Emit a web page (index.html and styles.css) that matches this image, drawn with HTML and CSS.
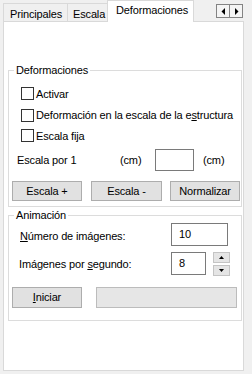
FILE: index.html
```html
<!DOCTYPE html>
<html>
<head>
<meta charset="utf-8">
<link rel="stylesheet" href="styles.css">
</head>
<body>
<div class="tabs">
  <div class="tab first">Principales</div>
  <div class="tab second">Escala</div>
  <div class="tab active">Deformaciones</div>
  <div class="arrows">
    <div class="arrow"><svg width="5" height="7" viewBox="0 0 5 7"><path d="M4 0 L4 7 L0.5 3.5 Z" fill="#000"/></svg></div>
    <div class="arrow"><svg width="5" height="7" viewBox="0 0 5 7"><path d="M1 0 L1 7 L4.5 3.5 Z" fill="#000"/></svg></div>
  </div>
</div>
<div class="panel">
  <fieldset class="group g1">
    <legend>Deformaciones</legend>
    <div class="check r1"><span class="box"></span><span>Activar</span></div>
    <div class="check r2"><span class="box"></span><span>Deformación en la escala de la e<u>s</u>tructura</span></div>
    <div class="check r3"><span class="box"></span><span>Escala fija</span></div>
    <div class="scale-row">
      <span class="lbl-scale">Escala por 1</span>
      <span class="cm1">(cm)</span>
      <span class="input in-scale"></span>
      <span class="cm2">(cm)</span>
    </div>
    <div class="btn-row">
      <div class="btn b1">Escala +</div>
      <div class="btn b2">Escala -</div>
      <div class="btn b3">Normalizar</div>
    </div>
  </fieldset>
  <fieldset class="group g2">
    <legend>Animación</legend>
    <div class="field-row fr1">
      <span class="flabel"><u>N</u>úmero de imágenes:</span>
      <span class="input in-num">10</span>
    </div>
    <div class="field-row fr2">
      <span class="flabel">Imágenes por <u>s</u>egundo:</span>
      <span class="input in-fps">8</span>
      <div class="spin">
        <div class="spb"><svg width="5" height="3" viewBox="0 0 5 3"><path d="M0 3 L5 3 L2.5 0 Z" fill="#000"/></svg></div>
        <div class="spb"><svg width="5" height="3" viewBox="0 0 5 3"><path d="M0 0 L5 0 L2.5 3 Z" fill="#000"/></svg></div>
      </div>
    </div>
    <div class="run-row">
      <div class="btn b-start"><u>I</u>niciar</div>
      <div class="progress"></div>
    </div>
  </fieldset>
</div>
</body>
</html>
```
FILE: styles.css
```css
html, body {
  margin: 0;
  padding: 0;
}
body {
  width: 252px;
  height: 374px;
  overflow: hidden;
  background: #f0f0f0;
  font-family: "Liberation Sans", Arial, sans-serif;
  font-size: 11px;
  letter-spacing: -0.15px;
  color: #000;
  white-space: nowrap;
}
u {
  text-decoration: underline;
  text-underline-offset: 1px;
}
.tabs {
  display: flex;
  align-items: flex-end;
  height: 21px;
  padding-left: 3px;
  position: relative;
}
.tab {
  box-sizing: border-box;
  height: 18px;
  border: 1px solid #d9d9d9;
  border-bottom: none;
  background: #f0f0f0;
  padding: 4px 0 0 6px;
  line-height: 13px;
  overflow: hidden;
}
.tab.first { width: 65px; }
.tab.second { width: 41px; margin-left: -1px; padding-left: 5px; }
.tab.active {
  width: 87px;
  height: 22px;
  margin-bottom: -1px;
  margin-left: -1px;
  background: #fff;
  position: relative;
  z-index: 1;
  padding: 3px 0 0 8px;
}
.arrows {
  display: flex;
  align-self: flex-start;
  margin: 4px 9px 0 auto;
}
.arrow {
  box-sizing: border-box;
  width: 14px;
  height: 14px;
  border: 1px solid #838383;
  background: #f4f4f4;
  display: flex;
  align-items: center;
  justify-content: center;
}
.arrow + .arrow { margin-left: -1px; }
.panel {
  box-sizing: border-box;
  margin-left: 3px;
  width: 241px;
  height: 350px;
  border: 1px solid #d9d9d9;
  background: #fff;
  padding-top: 41px;
}
.group {
  box-sizing: border-box;
  margin: 0 1px 0 4px;
  padding: 0;
  border: 1px solid #dcdcdc;
  width: 234px;
  min-width: 0;
}
.group legend {
  margin-left: 5px;
  padding: 0 2px;
  line-height: 14px;
  height: 14px;
}
.g2 { margin-top: 1px; }
.check {
  display: flex;
  align-items: center;
  padding-left: 12px;
}
.check .box {
  box-sizing: border-box;
  width: 13px;
  height: 13px;
  border: 1px solid #333;
  background: #fff;
  margin-right: 2px;
  flex: none;
}
.r1 { margin-top: 6px; height: 21px; }
.r2 { height: 22px; }
.r3 { height: 19px; }
.scale-row {
  display: flex;
  align-items: center;
  height: 22px;
  margin-top: 4px;
  padding-left: 8px;
}
.lbl-scale { width: 103px; }
.cm1 { width: 35px; }
.input {
  box-sizing: border-box;
  border: 1px solid #7a7a7a;
  background: #fff;
  display: block;
}
.in-scale { width: 39px; height: 22px; margin-right: 9px; }
.btn-row {
  display: flex;
  margin: 10px 0 5px 3px;
  gap: 8px;
}
.btn {
  box-sizing: border-box;
  height: 20px;
  width: 70px;
  border: 1px solid #adadad;
  background: #e1e1e1;
  text-align: center;
  line-height: 18px;
}
.btn.b2 { width: 71px; margin-left: 1px; }
.field-row {
  display: flex;
  align-items: flex-start;
  padding-left: 11px;
}
.fr1 { margin-top: 1px; height: 23px; }
.fr2 { margin-top: 6px; height: 23px; }
.flabel {
  width: 151px;
  padding-top: 7px;
  line-height: 13px;
}
.fr2 .flabel { padding-top: 6px; margin-left: -1px; width: 152px; }
.in-num {
  width: 57px;
  height: 23px;
  padding: 4px 0 0 7px;
  line-height: 13px;
}
.in-fps {
  width: 35px;
  height: 23px;
  padding: 4px 0 0 7px;
  line-height: 13px;
}
.spin {
  margin-left: 7px;
  display: flex;
  flex-direction: column;
  gap: 2px;
}
.spb {
  box-sizing: border-box;
  width: 17px;
  height: 11px;
  border: 1px solid #c4c4c4;
  background: #e5e5e5;
  display: flex;
  align-items: center;
  justify-content: center;
}
.run-row {
  display: flex;
  margin: 12px 0 12px 3px;
}
.b-start { height: 21px; line-height: 19px; }
.progress {
  box-sizing: border-box;
  margin-left: 14px;
  width: 141px;
  height: 21px;
  border: 1px solid #bcbcbc;
  background: #e6e6e6;
}
```
